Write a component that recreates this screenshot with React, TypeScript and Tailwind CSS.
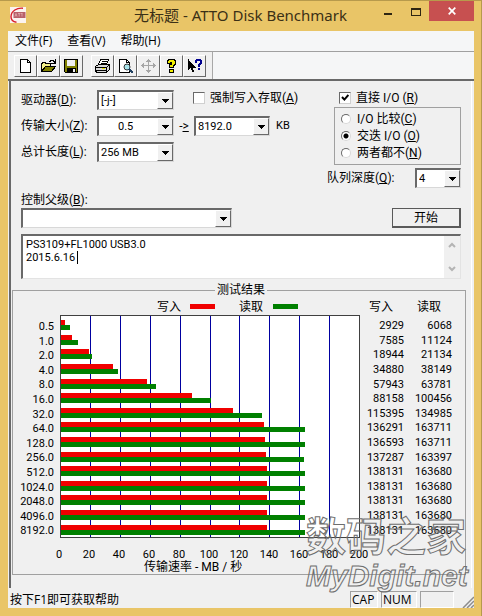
import type { ReactNode } from 'react'

const results = [
  { size: '0.5', write: 2929, read: 6068 },
  { size: '1.0', write: 7585, read: 11124 },
  { size: '2.0', write: 18944, read: 21134 },
  { size: '4.0', write: 34880, read: 38149 },
  { size: '8.0', write: 57943, read: 63781 },
  { size: '16.0', write: 88158, read: 100456 },
  { size: '32.0', write: 115395, read: 134985 },
  { size: '64.0', write: 136291, read: 163711 },
  { size: '128.0', write: 136593, read: 163711 },
  { size: '256.0', write: 137287, read: 163397 },
  { size: '512.0', write: 138131, read: 163680 },
  { size: '1024.0', write: 138131, read: 163680 },
  { size: '2048.0', write: 138131, read: 163680 },
  { size: '4096.0', write: 138131, read: 163680 },
  { size: '8192.0', write: 138131, read: 163680 },
]

const ticks = [0, 20, 40, 60, 80, 100, 120, 140, 160, 180, 200]

// chart axis ends at 200 MB/s, values are KB/s
const toPercent = (kb: number) => `${kb / 2000}%`

function ToolButton({ label, children }: { label: string; children: ReactNode }) {
  return (
    <button
      type="button"
      aria-label={label}
      className="flex h-[22px] w-[23px] items-center justify-center border border-t-white border-l-white border-r-[#696969] border-b-[#696969] bg-[#f0f0f0]"
    >
      <svg width="17" height="16" viewBox="0 0 17 16" shapeRendering="crispEdges">
        {children}
      </svg>
    </button>
  )
}

type ComboProps = { id: string; options: string[]; className: string; selectClass?: string }

function Combo({ id, options, className, selectClass = 'pl-[2px]' }: ComboProps) {
  return (
    <div className={`relative h-5 shrink-0 border-t-2 border-l-2 border-r border-b border-t-[#696969] border-l-[#696969] border-r-[#d8d8d8] border-b-[#d8d8d8] bg-white ${className}`}>
      <select id={id} className={`block h-full w-full appearance-none bg-white pr-4 text-[11px] leading-4 outline-none ${selectClass}`}>
        {options.map((o) => (
          <option key={o}>{o}</option>
        ))}
      </select>
      <span className="pointer-events-none absolute top-0 right-0 flex h-full w-4 items-center justify-center border border-t-white border-l-white border-r-[#696969] border-b-[#696969] bg-[#f0f0f0]">
        <svg width="7" height="4" viewBox="0 0 7 4" shapeRendering="crispEdges">
          <path d="M0 0h7v1H6v1H5v1H4v1H3V3H2V2H1V1H0z" />
        </svg>
      </span>
    </div>
  )
}

function Check({ id, checked, children }: { id: string; checked?: boolean; children: ReactNode }) {
  return (
    <div className="flex items-center gap-[5px]">
      <span className="relative h-3 w-3 shrink-0">
        <input
          id={id}
          type="checkbox"
          defaultChecked={checked}
          className="peer block h-3 w-3 appearance-none border border-t-[#696969] border-l-[#696969] border-r-[#d0d0d0] border-b-[#d0d0d0] bg-white"
        />
        <svg className="pointer-events-none absolute top-[2px] left-[2px] hidden peer-checked:block" width="8" height="8" viewBox="0 0 8 8">
          <path d="M1 3l2.4 2.6L7.4 1" fill="none" stroke="#000" strokeWidth="2" />
        </svg>
      </span>
      <label htmlFor={id} className="whitespace-nowrap">{children}</label>
    </div>
  )
}

function Radio({ id, checked, children }: { id: string; checked?: boolean; children: ReactNode }) {
  return (
    <div className="flex h-[17px] items-center gap-[6px]">
      <input
        id={id}
        type="radio"
        name="iomode"
        defaultChecked={checked}
        className="h-[10px] w-[10px] shrink-0 appearance-none rounded-full border border-t-[#696969] border-l-[#696969] border-r-[#d8d8d8] border-b-[#d8d8d8] bg-white checked:bg-[radial-gradient(circle,#000_2px,#fff_3px)]"
      />
      <label htmlFor={id} className="whitespace-nowrap">{children}</label>
    </div>
  )
}

function TitleBar() {
  return (
    <header className="relative flex h-[31px] items-start justify-between border-t border-[#b79a4c] pr-[7px] pl-[10px]">
      <svg className="mt-[6px]" width="16" height="16" viewBox="0 0 16 16">
        <rect width="16" height="16" fill="#fbf3f0" />
        <path d="M13 1.2C7 .4 1.2 4 1 9.5c-.1 3 2 5.300 5.500 5.700" fill="none" stroke="#d8202c" strokeWidth="1.400" />
        <rect x="3.500" y="5" width="12" height="6" fill="#b8606a" />
        <path d="M5 9.500l1-3 1 3M8 6.500h2.500M9.200 6.500v3M11 6.500h1.500M12 6.500v3" fill="none" stroke="#e3b0b4" strokeWidth=".8" />
      </svg>
      <h1 className="absolute inset-x-0 top-[2px] text-center font-['Noto_Sans','Noto_Sans_CJK_SC',sans-serif] text-[15px] leading-6 text-[#3b3016]">
        无标题 - ATTO Disk Benchmark
      </h1>
      <div className="relative flex">
        <button type="button" aria-label="最小化" className="flex h-[19px] w-7 items-center justify-center">
          <span className="mt-[6px] h-[2px] w-2 bg-[#2e2612]" />
        </button>
        <button type="button" aria-label="最大化" className="flex h-[19px] w-[27px] items-center justify-center">
          <span className="mt-[2px] h-2 w-[10px] border border-t-2 border-[#2e2612]" />
        </button>
        <button type="button" aria-label="关闭" className="flex h-5 w-[45px] items-center justify-center bg-[#c75050]">
          <svg width="8" height="8" viewBox="0 0 8 8">
            <path d="M.7.7l6.600 6.600M7.300.7L.7 7.300" stroke="#fff" strokeWidth="1.700" />
          </svg>
        </button>
      </div>
    </header>
  )
}

function Toolbar() {
  return (
    <div className="flex h-[29px] border-b-2 border-[#696969] bg-[#f5f6f7]">
      <div className="flex items-center border-r border-[#a8a8a8] bg-[#f0f0f0] pr-[6px] pl-[6px]">
        <ToolButton label="新建">
          <path d="M3.500 1.500h7l3 3v10h-10z" fill="#fff" stroke="#000" />
          <path d="M10.500 1.500v3h3" fill="none" stroke="#000" />
        </ToolButton>
        <ToolButton label="打开">
          <path d="M1.500 13.500v-8h1v-1h3v1h5v3h-5z" fill="#f4f08a" stroke="#000" />
          <path d="M1.500 13.500l4-5h10l-4 5z" fill="#808000" stroke="#000" />
          <path d="M9 3h1V2h3v1h1v1h1M15 1v4h-4" fill="none" stroke="#000" />
        </ToolButton>
        <ToolButton label="保存">
          <path d="M1.500 1.500h13v13h-12l-1-1z" fill="#808000" stroke="#000" />
          <path d="M4 2h8v6H4z" fill="#f0f0f0" />
          <path d="M4 10h9v5H4z" fill="#000" />
          <path d="M10 11h2v3h-2z" fill="#f0f0f0" />
        </ToolButton>
        <div className="w-2" />
        <ToolButton label="打印">
          <path d="M4.500 6.500l2-5h8l-2 5z" fill="#fff" stroke="#000" />
          <path d="M7.500 3.500h5M6.500 5.500h5" stroke="#000" />
          <path d="M1.500 8.500l3-2h11v5l-3 3h-10l-1-2z" fill="#d8d8d8" stroke="#000" />
          <path d="M1.500 9.500h11v3h-11M12.500 9.500l3-3M12.500 9.500v5" fill="none" stroke="#000" />
          <path d="M8 10h3v1H8z" fill="#e6e600" />
        </ToolButton>
        <ToolButton label="打印预览">
          <path d="M2.500 1.500h7l3 3v10h-10z" fill="#fff" stroke="#000" />
          <path d="M9.500 1.500v3h3" fill="none" stroke="#000" />
          <circle cx="10" cy="9" r="3" fill="#a8e4ea" stroke="#333" shapeRendering="auto" />
          <path d="M12 11l4 4" stroke="#204060" strokeWidth="2" />
        </ToolButton>
        <ToolButton label="移动">
          <path d="M8 1h1v1h1v1h1v1H9v3h4V5h1v1h1v1h1v1h-1v1h-1v1h-1V8H9v4h2v1h-1v1H9v1H8v-1H7v-1H6v-1h2V8H4v2H3V9H2V8H1V7h1V6h1V5h1v2h4V4H6V3h1V2h1z" fill="#a6a6a6" />
        </ToolButton>
        <ToolButton label="帮助">
          <path d="M4.500 5.500v-3h1v-1h6v1h1v4h-1v1h-1v2h-4v-3h2v-2h-1v1zM6.500 11.500h4v3h-4z" fill="#f0ee00" stroke="#000" />
        </ToolButton>
        <ToolButton label="这是什么">
          <path d="M2 1v11h1v-1h1v-1h1v2h1v2h2v-2H7v-2h3V9H9V8H8V7H7V6H6V5H5V4H4V3H3V1z" fill="#000" />
          <path d="M9 5V2h1V1h5v1h1v4h-1v1h-1v2h-2V6h1V5h1V3h-3v2zM12 10h2v2h-2z" fill="#000090" />
        </ToolButton>
      </div>
    </div>
  )
}

function Settings() {
  return (
    <form className="pt-[9px] pr-[10px] pl-[10px]" onSubmit={(e) => e.preventDefault()}>
      <div className="flex items-start justify-between">
        <div className="flex flex-col gap-[6px]">
          <div className="flex items-center">
            <label htmlFor="drive" className="w-[76px] shrink-0">驱动器(<u>D</u>):</label>
            <Combo id="drive" options={['[-j-]']} className="w-[77px]" />
            <div className="-mt-1 ml-[19px]">
              <Check id="force">强制写入存取(<u>A</u>)</Check>
            </div>
          </div>
          <div className="flex items-center">
            <label htmlFor="minsize" className="w-[76px] shrink-0">传输大小(<u>Z</u>):</label>
            <Combo id="minsize" options={['0.5']} className="w-[77px]" selectClass="pl-[19px]" />
            <label htmlFor="maxsize" className="w-5 shrink-0 text-center">-<u>&gt;</u></label>
            <Combo id="maxsize" options={['8192.0']} className="w-[76px]" />
            <span className="ml-[6px] text-[11px]">KB</span>
          </div>
          <div className="flex items-center">
            <label htmlFor="length" className="w-[76px] shrink-0">总计长度(<u>L</u>):</label>
            <Combo id="length" options={['256 MB']} className="w-[77px]" />
          </div>
        </div>

        <div className="flex w-[134px] shrink-0 flex-col">
          <div className="h-[17px] pl-[12px]">
            <Check id="direct" checked>直接 I/O (<u>R</u>)</Check>
          </div>
          <fieldset className="ml-[7px] h-[58px] border border-[#a0a0a0] pt-[2px] pl-[6px]">
            <Radio id="compare">I/O 比较(<u>C</u>)</Radio>
            <Radio id="overlap" checked>交迭 I/O (<u>O</u>)</Radio>
            <Radio id="neither">两者都不(<u>N</u>)</Radio>
          </fieldset>
          <div className="mt-[3px] flex items-center justify-between">
            <label htmlFor="queue" className="whitespace-nowrap">队列深度(<u>Q</u>):</label>
            <Combo id="queue" options={['4']} className="w-[46px]" />
          </div>
        </div>
      </div>

      <div className="mt-[4px] flex items-end justify-between">
        <div>
          <label htmlFor="parent" className="block h-4 leading-4">控制父级(<u>B</u>):</label>
          <Combo id="parent" options={['']} className="w-[211px]" />
        </div>
        <button type="submit" className="h-5 w-[69px] border-t border-l border-r-2 border-b-2 border-[#5a5a5a] bg-[#f0f0f0] leading-4">
          开始
        </button>
      </div>

      <div className="relative mt-[6px] flex h-[45px] border-t-2 border-l-2 border-r border-b border-t-[#696969] border-l-[#696969] border-r-[#e3e3e3] border-b-[#e3e3e3] bg-white">
        <textarea
          aria-label="描述"
          spellCheck={false}
          defaultValue={'PS3109+FL1000 USB3.0\n2015.6.16'}
          className="block h-full min-w-0 flex-1 resize-none overflow-hidden pt-[2px] pl-[3px] text-[11px] leading-[13px] outline-none"
        />
        {/* text caret */}
        <span className="pointer-events-none absolute top-[15px] left-[54px] h-[13px] w-px bg-black" />
        <div className="flex w-4 flex-col items-center justify-between bg-[#f0f0f0] py-[6px]">
          <svg width="8" height="6" viewBox="0 0 8 6"><path d="M1 5l3-3 3 3" fill="none" stroke="#b4b4b4" strokeWidth="2" /></svg>
          <svg width="8" height="6" viewBox="0 0 8 6"><path d="M1 1l3 3 3-3" fill="none" stroke="#b4b4b4" strokeWidth="2" /></svg>
        </div>
      </div>
    </form>
  )
}

function Results() {
  return (
    <section className="mt-[3px] mr-[5px] ml-px">
      <fieldset className="border border-[#a0a0a0] pb-px pl-[4px]">
        <legend className="mx-auto h-4 px-[2px] leading-4">测试结果</legend>

        <div className="flex">
          <div className="w-[43px] shrink-0" />
          <div className="flex h-[17px] min-w-0 flex-1 items-center pl-[97px]">
            写入<span className="ml-[9px] h-[5px] w-[25px] bg-[#f00000]" />
            <span className="ml-6">读取</span><span className="ml-[10px] h-[5px] w-[25px] bg-[#008000]" />
          </div>
        </div>

        <div className="flex h-[224px]">
          <ul className="mt-[2px] flex h-[223px] w-[43px] shrink-0 flex-col pt-[3px] pr-[6px] pb-px text-right text-[11px]">
            {results.map((r) => (
              <li key={r.size} className="flex min-h-0 flex-1 items-center justify-end">{r.size}</li>
            ))}
          </ul>

          <div className="relative h-[223px] min-w-0 flex-1 border border-[#404040] bg-white">
            <div className="absolute inset-0 flex">
              {ticks.slice(1).map((t) => (
                <span key={t} className="flex-1 border-r border-[#0000a0] last:border-r-0" />
              ))}
            </div>
            <div className="relative flex h-full flex-col pt-[2px]">
              {results.map((r) => (
                <div key={r.size} className="flex min-h-0 flex-1 flex-col justify-center">
                  <div className="h-[5px] shrink-0 bg-[#f00000]" style={{ width: toPercent(r.write) }} />
                  <div className="h-[5px] shrink-0 bg-[#008000]" style={{ width: toPercent(r.read) }} />
                </div>
              ))}
            </div>
          </div>

          <table className="-mt-[15px] h-[238px] w-[105px] shrink-0 border-collapse text-right text-[11px] leading-[14px]">
            <thead>
              <tr className="h-[19px] text-xs">
                <th className="w-[44px] p-0 pr-[11px] text-right align-top leading-[14px] font-normal">写入</th>
                <th className="p-0 pr-[24px] text-right align-top leading-[14px] font-normal">读取</th>
              </tr>
            </thead>
            <tbody>
              {results.map((r) => (
                <tr key={r.size}>
                  <td className="p-0">{r.write}</td>
                  <td className="p-0 pr-[13px]">{r.read}</td>
                </tr>
              ))}
            </tbody>
          </table>
        </div>

        <div className="mt-[9px] mr-[106px] ml-[42px] flex h-[14px] justify-between text-[11px] leading-[14px]">
          {ticks.map((t) => (
            <span key={t} className="flex w-0 justify-center">{t}</span>
          ))}
        </div>
        <p className="h-[11px] pl-[127px] leading-[11px]">传输速率 - MB / 秒</p>
      </fieldset>
    </section>
  )
}

function StatusBar() {
  const cell = 'h-[17px] border border-t-[#a0a0a0] border-l-[#a0a0a0] border-r-white border-b-white pl-px'
  return (
    <footer className="flex h-5 items-end bg-[#f0f0f0] font-['Open_Sans','Noto_Sans_CJK_SC',sans-serif] text-xs leading-4">
      <p className="flex-1 pl-[2px]">按下F1即可获取帮助</p>
      <div className="flex gap-[3px]">
        <span className={`w-7 ${cell}`}>CAP</span>
        <span className={`w-9 ${cell}`}>NUM</span>
        <span className={`w-[34px] ${cell}`} />
      </div>
      <svg className="ml-2" width="12" height="12" viewBox="0 0 12 12">
        <path d="M1 12L12 1M5 12l7-7M9 12l3-3" stroke="#8c8c8c" strokeWidth="1.500" />
      </svg>
    </footer>
  )
}

export default function App() {
  return (
    <div className="relative border-r border-[#b79a4c] bg-[#e9c567] pb-2 font-['Roboto','Noto_Sans_CJK_SC',sans-serif] text-xs text-black">
      <TitleBar />
      <main className="mr-[7px] ml-2 bg-[#f0f0f0]">
        <nav className="flex h-[21px] items-center gap-[15px] border-b border-[#a0a0a0] bg-[#f5f6f7] pl-[7px] font-['Open_Sans','Noto_Sans_CJK_SC',sans-serif]">
          <button type="button">文件(F)</button>
          <button type="button">查看(V)</button>
          <button type="button">帮助(H)</button>
        </nav>
        <Toolbar />
        <div className="mr-[2px] ml-px border-r border-l-2 border-r-white border-l-[#696969] pb-[13px]">
          <Settings />
          <Results />
        </div>
        <StatusBar />
      </main>

      {/* watermark */}
      <div className="pointer-events-none absolute right-[7px] bottom-[21px] w-[168px] whitespace-nowrap text-transparent [-webkit-text-stroke:1px_#6e6e6e]">
        <p className="font-['Noto_Sans_CJK_SC',sans-serif] text-[40px] leading-[46px] font-bold">数码之家</p>
        <p className="font-['Liberation_Sans',sans-serif] text-[30px] leading-[38px] font-bold italic">MyDigit.net</p>
      </div>
    </div>
  )
}
